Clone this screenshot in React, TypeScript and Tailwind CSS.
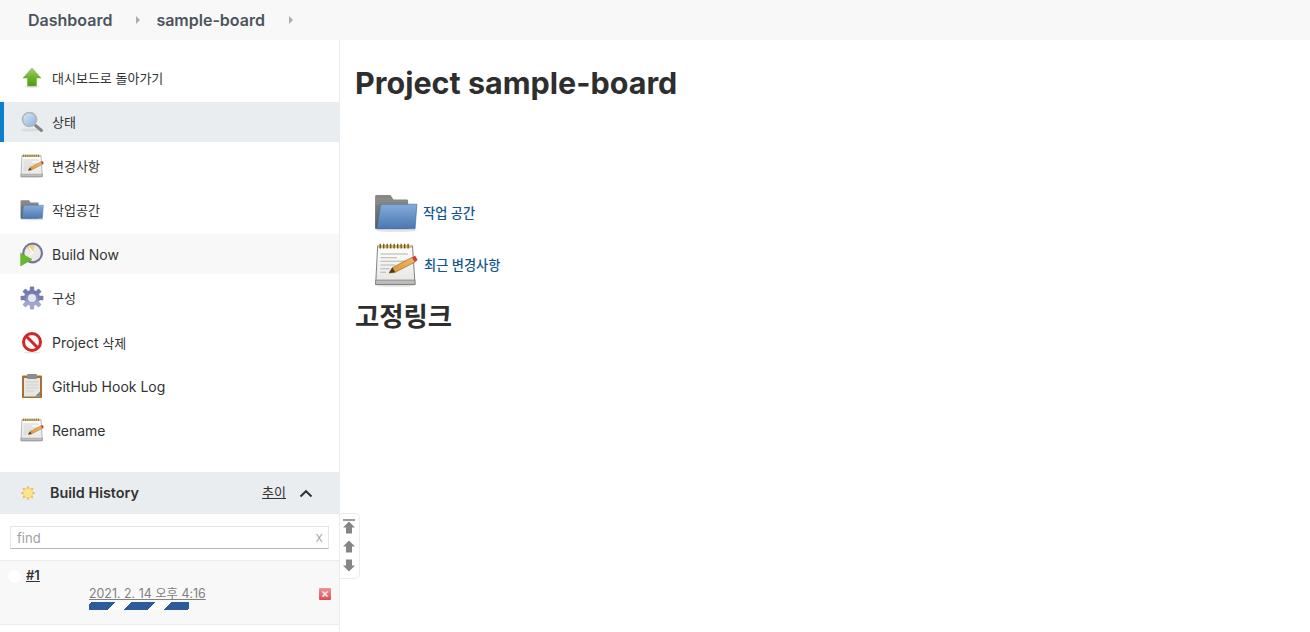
import type { ReactNode } from "react";

const font = { fontFamily: "Inter, 'Noto Sans CJK KR', sans-serif" };

function UpIcon() {
  return (
    <svg width="24" height="24" viewBox="0 0 24 24">
      <defs>
        <linearGradient id="up" x1="0" y1="0" x2="0" y2="1">
          <stop offset="0" stopColor="#a3d46e" />
          <stop offset="0.55" stopColor="#68b32a" />
          <stop offset="1" stopColor="#4e9a10" />
        </linearGradient>
      </defs>
      <ellipse cx="12" cy="20.6" rx="8" ry="1.3" fill="#000" opacity="0.1" />
      <path d="M12 2 L21 12 H16.5 V20 H7.5 V12 H3 Z" fill="url(#up)" stroke="#6fa845" strokeWidth="0.5" />
    </svg>
  );
}

function SearchIcon() {
  return (
    <svg width="24" height="24" viewBox="0 0 24 24">
      <defs>
        <linearGradient id="lens" x1="0" y1="0" x2="1" y2="1">
          <stop offset="0" stopColor="#dbe9f6" />
          <stop offset="1" stopColor="#86b2e2" />
        </linearGradient>
      </defs>
      <ellipse cx="10" cy="20" rx="9" ry="1.6" fill="#000" opacity="0.07" />
      <path d="M15.5 15.5 L21.5 20.5" stroke="#85857f" strokeWidth="3" strokeLinecap="round" />
      <circle cx="9.5" cy="9.5" r="7" fill="url(#lens)" stroke="#b3b6b6" strokeWidth="1.6" />
    </svg>
  );
}

function NotepadIcon({ size = 24 }: { size?: number }) {
  return (
    <svg width={size} height={size} viewBox="0 0 24 24">
      <defs>
        <linearGradient id="page" x1="0" y1="0" x2="0" y2="1">
          <stop offset="0" stopColor="#ffffff" />
          <stop offset="1" stopColor="#e4e4e2" />
        </linearGradient>
        <linearGradient id="pencil" x1="0" y1="1" x2="1" y2="0">
          <stop offset="0" stopColor="#d8963a" />
          <stop offset="1" stopColor="#f0b860" />
        </linearGradient>
      </defs>
      <ellipse cx="11.5" cy="23.2" rx="11" ry="0.7" fill="#000" opacity="0.12" />
      <path d="M2 1.6 H21 L22.4 22.6 H0.9 Z" fill="url(#page)" stroke="#555" strokeWidth="0.4" />
      <path d="M0.9 20.2 H22.3 L22.4 22.6 H0.9 Z" fill="#bdbdbb" stroke="#666" strokeWidth="0.3" />
      <rect x="2.4" y="1.2" width="18.2" height="1.6" fill="#d9c27a" />
      <path d="M3.4 0.4v2.6M5.3 0.4v2.6M7.2 0.4v2.6M9.1 0.4v2.6M11 0.4v2.6M12.9 0.4v2.6M14.8 0.4v2.6M16.7 0.4v2.6M18.6 0.4v2.6" stroke="#6a5418" strokeWidth="0.7" />
      <path d="M3.5 6h15M3.5 8h9M3.5 10h15M3.5 12h8M3.5 14h5M3.5 16h3" stroke="#b4b4b0" strokeWidth="0.55" />
      <path d="M8.2 16.4 L10 13.4 L20.8 7.8 L22.4 10.4 L11.6 16 Z" fill="url(#pencil)" stroke="#8a5a18" strokeWidth="0.3" />
      <path d="M8.2 16.4 L10 13.4 L11.6 16 Z" fill="#4a3a22" />
      <path d="M20.8 7.8 L22.5 6.9 L23.8 9.3 L22.4 10.4 Z" fill="#d23a38" />
    </svg>
  );
}

function FolderIcon({ size = 24 }: { size?: number }) {
  return (
    <svg width={size} height={size} viewBox="0 0 24 24">
      <defs>
        <linearGradient id="fold" x1="0" y1="0" x2="0" y2="1">
          <stop offset="0" stopColor="#86abd9" />
          <stop offset="1" stopColor="#4a78b2" />
        </linearGradient>
        <linearGradient id="back" x1="0" y1="0" x2="0" y2="1">
          <stop offset="0" stopColor="#8a8a88" />
          <stop offset="1" stopColor="#5a5a58" />
        </linearGradient>
      </defs>
      <ellipse cx="12" cy="21.4" rx="11.5" ry="1" fill="#000" opacity="0.1" />
      <path d="M0.6 20.6 V3 a0.8 0.8 0 0 1 0.8-0.8 h7.6 l1.6 2.4 h7.2 a0.8 0.8 0 0 1 0.8 0.8 V20.6 Z" fill="url(#back)" />
      <path d="M0.6 4.4h9M0.6 5.6h18M0.6 6.8h18" stroke="#a2a2a0" strokeWidth="0.25" />
      <path d="M3.6 7.2 H23.4 L22.4 20.6 H1.6 Z" fill="url(#fold)" stroke="#3f6898" strokeWidth="0.35" />
    </svg>
  );
}

function ClockIcon() {
  return (
    <svg width="24" height="24" viewBox="0 0 24 24">
      <circle cx="12.6" cy="11" r="10.4" fill="#74769c" />
      <circle cx="12.6" cy="11" r="8.2" fill="#eceae2" />
      <path d="M12 2.8 A8.2 8.2 0 0 0 6.4 5.6 L12.6 11 L14.6 3.2 A8.2 8.2 0 0 0 12 2.8 Z" fill="#e8d28a" />
      <path d="M9 5.5 L13 10.5 L9.5 13" stroke="#fff" strokeWidth="1.5" fill="none" />
      <path d="M0.6 11 L12 17.4 L0.6 24 Z" fill="#66bb2c" stroke="#4c9a1e" strokeWidth="0.4" />
    </svg>
  );
}

function GearIcon() {
  const teeth = [0, 45, 90, 135, 180, 225, 270, 315];
  return (
    <svg width="24" height="24" viewBox="0 0 24 24">
      <defs>
        <linearGradient id="gear" x1="0" y1="0" x2="0" y2="1">
          <stop offset="0" stopColor="#6a74a4" />
          <stop offset="1" stopColor="#a9add4" />
        </linearGradient>
      </defs>
      <g fill="url(#gear)">
        <circle cx="12" cy="12" r="8" />
      </g>
      {teeth.map((a) => (
        <rect key={a} x="9.8" y="0.6" width="4.4" height="5.4" rx="0.8" fill={a > 90 && a < 270 ? "#a2a6ce" : "#757eaa"} transform={`rotate(${a} 12 12)`} />
      ))}
      <circle cx="12" cy="12" r="4" fill="#e8e7f0" />
    </svg>
  );
}

function NoIcon() {
  return (
    <svg width="24" height="24" viewBox="0 0 24 24">
      <ellipse cx="12" cy="22.6" rx="8" ry="1" fill="#000" opacity="0.1" />
      <circle cx="12" cy="12" r="8.5" fill="#f6f6f6" stroke="#cf2727" strokeWidth="3" />
      <path d="M6 6 L18 18" stroke="#cf2727" strokeWidth="3" />
    </svg>
  );
}

function ClipboardIcon() {
  return (
    <svg width="24" height="24" viewBox="0 0 24 24">
      <rect x="2" y="1.5" width="20" height="22.5" rx="1" fill="#a86f33" />
      <rect x="4" y="4" width="16" height="18.5" fill="#e6e6e4" />
      <path d="M6 8h12M6 11h12M6 14h12M6 17h8" stroke="#d8d8d6" strokeWidth="1.6" />
      <rect x="7" y="0" width="10" height="5" rx="1" fill="#8d8d8b" />
      <path d="M15 22.5 L20 17.5 V22.5 Z" fill="#8a8a88" />
    </svg>
  );
}

function SunIcon() {
  const rays = [0, 45, 90, 135, 180, 225, 270, 315];
  return (
    <svg width="16" height="16" viewBox="0 0 16 16">
      {rays.map((a) => (
        <path key={a} d="M8 0.4 L9.3 3.4 H6.7 Z" fill="#f4a94a" transform={`rotate(${a} 8 8)`} />
      ))}
      <circle cx="8" cy="8" r="4.8" fill="#fbe58a" stroke="#f3c658" strokeWidth="0.6" />
    </svg>
  );
}

type SideItem = { id: string; label: ReactNode; icon: ReactNode; state?: "active" | "hover" };

const sideItems: SideItem[] = [
  { id: "back", label: "대시보드로 돌아가기", icon: <UpIcon /> },
  { id: "status", label: "상태", icon: <SearchIcon />, state: "active" },
  { id: "changes", label: "변경사항", icon: <NotepadIcon /> },
  { id: "workspace", label: "작업공간", icon: <FolderIcon /> },
  { id: "build", label: <span className="text-[14px]">Build Now</span>, icon: <ClockIcon />, state: "hover" },
  { id: "config", label: "구성", icon: <GearIcon /> },
  {
    id: "delete",
    label: (
      <>
        <span className="text-[14px]">Project</span> 삭제
      </>
    ),
    icon: <NoIcon />,
  },
  { id: "hook", label: <span className="text-[14px]">GitHub Hook Log</span>, icon: <ClipboardIcon /> },
  { id: "rename", label: <span className="text-[14px]">Rename</span>, icon: <NotepadIcon /> },
];

function Caret() {
  return <span className="h-0 w-0 border-y-[4px] border-l-[4px] border-y-transparent border-l-[#a9adb3]" />;
}

export default function App() {
  return (
    <div className="h-[632px] overflow-hidden bg-white text-[#333]" style={font}>
      {/* Breadcrumbs */}
      <div className="flex h-10 items-center bg-[#f8f8f8] pl-7 text-[16px] font-semibold text-[#4d545d]">
        <span>Dashboard</span>
        <span className="ml-[24px] mr-[16px] flex"><Caret /></span>
        <span>sample-board</span>
        <span className="ml-[24px] flex"><Caret /></span>
      </div>

      <div className="flex">
        {/* Side panel */}
        <div className="relative h-[592px] w-[340px] shrink-0 border-r border-[#e9edf0]">
          <div className="flex flex-col gap-1 pt-[18px]">
            {sideItems.map((item) => (
              <div
                key={item.id}
                className={
                  item.state === "active"
                    ? "flex h-10 items-center border-l-4 border-[#0b7fc9] bg-[#e9edf0] pl-4 text-[13px] text-[#333]"
                    : item.state === "hover"
                      ? "flex h-10 items-center bg-[#f8f8f8] pl-5 text-[13px] text-[#333]"
                      : "flex h-10 items-center pl-5 text-[13px] text-[#333]"
                }
              >
                <span className="flex w-6 justify-center">{item.icon}</span>
                <span className="ml-2 pt-0.5">{item.label}</span>
              </div>
            ))}
          </div>

          {/* Build history */}
          <div className="mt-[22px] flex h-[42px] items-center bg-[#e9edf0] pl-5 pr-[26px]">
            <SunIcon />
            <span className="ml-[14px] text-[14.4px] font-semibold text-[#333]">Build History</span>
            <span className="ml-auto text-[13px] text-[#333] underline">추이</span>
            <svg className="ml-[13px]" width="14" height="9" viewBox="0 0 14 9">
              <path d="M1.5 7.5 L7 2.2 L12.5 7.5" stroke="#333" strokeWidth="2" fill="none" />
            </svg>
          </div>
          <div className="h-[47px] border-b border-[#e9edf0] px-[10px] pt-[12px]">
            <div className="flex h-[23px] items-center justify-between border border-[#e6e6e6] border-b-[#b8b8b8] pl-[6px] pr-[5px] pt-[2px] text-[13px] text-[#a0a0a0]">
              <span>find</span>
              <span className="pb-[5px] text-[14px] font-light">x</span>
            </div>
          </div>
          <div className="relative h-[64px] border-b border-[#e9edf0] bg-[#f8f8f8]">
            <span className="absolute left-2 top-[9px] h-[13px] w-[13px] rounded-full bg-white" />
            <span className="absolute left-[26px] top-[5px] text-[13px] font-semibold text-[#333] underline">#1</span>
            <span className="absolute left-[89px] top-[24px] text-[12.4px] text-[#808080] underline">2021. 2. 14 오후 4:16</span>
            <div className="absolute left-[89px] top-[41px] h-2 w-[100px] bg-[repeating-linear-gradient(-45deg,#2b5b98_1.4px,#2b5b98_17.7px,#fff_17.7px,#fff_29.68px)]" />
            <span className="absolute left-[319px] top-[27px] flex h-3 w-3 items-center justify-center rounded-[1px] bg-gradient-to-b from-[#ee9298] to-[#d94a55] text-[12px] font-bold leading-none text-[#fbe4e4]">×</span>
          </div>

          {/* Scroll buttons */}
          <div className="absolute left-[339px] top-[473px] flex h-[66px] w-[21px] flex-col items-center gap-[6px] rounded-r-[5px] border border-[#e9edf0] bg-white pr-px pt-[5px]">
            <svg width="14" height="15" viewBox="0 0 14 15">
              <path d="M1 1h12" stroke="#858585" strokeWidth="1.6" />
              <path d="M7 2.6 L13 8.5 H10 V14.5 H4 V8.5 H1 Z" fill="#858585" />
            </svg>
            <svg width="14" height="13" viewBox="0 0 14 13">
              <path d="M7 0.5 L13 6.5 H10 V12.5 H4 V6.5 H1 Z" fill="#858585" />
            </svg>
            <svg width="14" height="13" viewBox="0 0 14 13">
              <path d="M7 12.5 L13 6.5 H10 V0.5 H4 V6.5 H1 Z" fill="#858585" />
            </svg>
          </div>
        </div>

        {/* Main */}
        <div className="flex-1 pl-[15px]">
          <h1 className="mt-[24px] text-[30.5px] font-bold leading-[38px] text-[#2e2e2e]">Project sample-board</h1>
          <div className="ml-[19px] mt-[89px] flex flex-col gap-2">
            <div className="flex h-11 items-center">
              <FolderIcon size={44} />
              <a className="ml-[5px] pt-0.5 text-[13.2px] font-medium text-[#12568f]">작업 공간</a>
            </div>
            <div className="flex h-11 items-center">
              <NotepadIcon size={44} />
              <a className="ml-[6px] pt-0.5 text-[13.2px] font-medium text-[#12568f]">최근 변경사항</a>
            </div>
          </div>
          <h2 className="mt-[13px] text-[26.4px] font-bold leading-[32px] text-[#2e2e2e]">고정링크</h2>
        </div>
      </div>
    </div>
  );
}
